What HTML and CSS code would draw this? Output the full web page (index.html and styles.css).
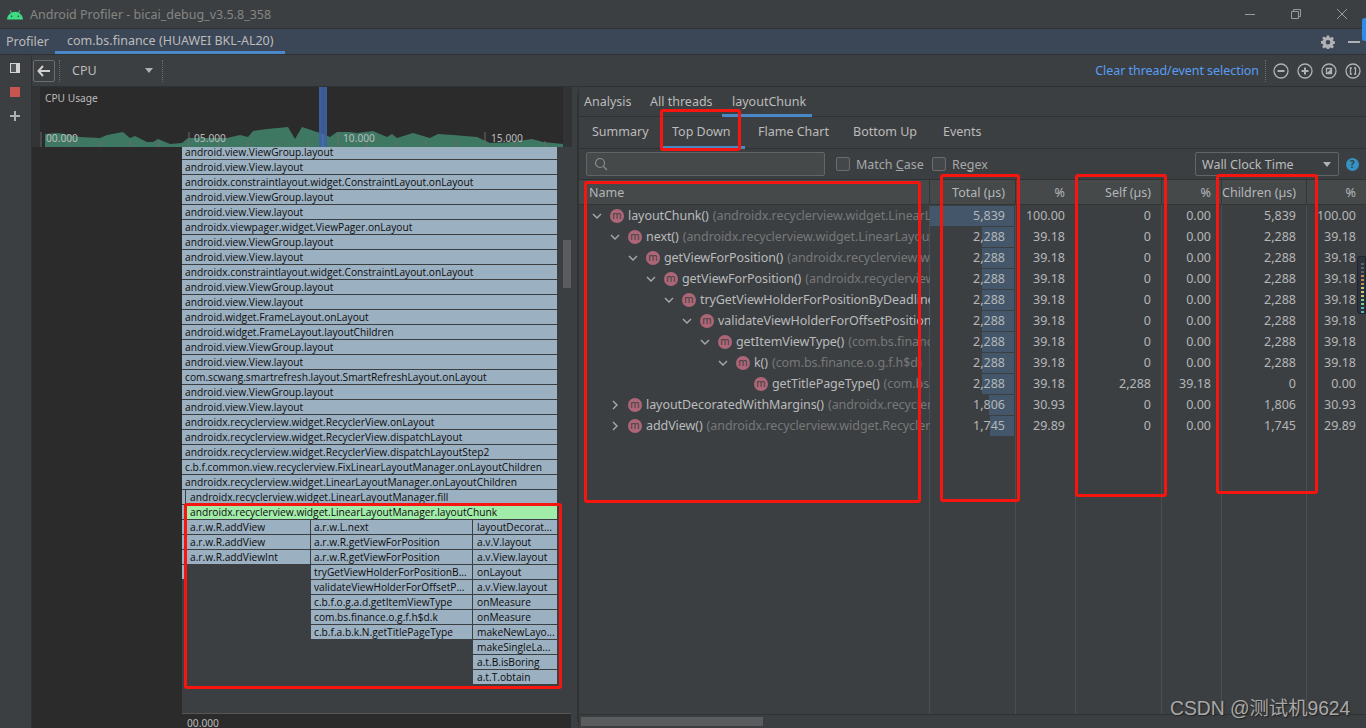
FILE: index.html
```html
<!DOCTYPE html>
<html lang="en">
<head>
<meta charset="utf-8">
<title>Android Profiler</title>
<link rel="stylesheet" href="styles.css">
</head>
<body>
<div class="app">
  <header class="titlebar">
    <svg class="droid" viewBox="0 0 16 12" width="16" height="12"><path d="M0 11.500a8 8 0 0 1 4-6.600L2.700 2.600l.7-.4L4.800 4.500a8 8 0 0 1 6.400 0L12.600 2.200l.7.4L12 4.900a8 8 0 0 1 4 6.600z" fill="#3ddc84"/><circle cx="4.600" cy="8.300" r=".8" fill="#3c3f41"/><circle cx="11.400" cy="8.300" r=".8" fill="#3c3f41"/></svg>
    <span class="title-text">Android Profiler - bicai_debug_v3.5.8_358</span>
    <div class="winctl">
      <svg width="12" height="12" viewBox="0 0 12 12"><path d="M1 6.500h10" stroke="#9a9a9a" fill="none"/></svg>
      <svg width="12" height="12" viewBox="0 0 12 12"><path d="M1.500 3.500h7v7h-7zM3.500 3.500v-2h7v7h-2" stroke="#9a9a9a" fill="none"/></svg>
      <svg width="12" height="12" viewBox="0 0 12 12"><path d="M1 1l10 10M11 1L1 11" stroke="#9a9a9a" fill="none"/></svg>
    </div>
  </header>

  <nav class="toolwin">
    <span class="tw-label">Profiler</span>
    <span class="tw-tab">com.bs.finance (HUAWEI BKL-AL20)</span>
    <div class="tw-actions">
      <svg width="14" height="14" viewBox="0 0 14 14"><path d="M5.800.5h2.400l.3 1.800 1.200.5L11.200 1.700l1.700 1.700-1.100 1.500.5 1.200 1.800.3v2.400l-1.800.3-.5 1.200 1.100 1.500-1.700 1.700-1.500-1.100-1.200.5-.3 1.800H5.800l-.3-1.800-1.200-.5-1.500 1.100-1.700-1.700 1.100-1.500-.5-1.200L0 8.500V6.100l1.800-.3.5-1.200-1.100-1.500 1.700-1.700 1.500 1.100 1.200-.5zM7 5a2.300 2.300 0 1 0 0 4.600A2.300 2.300 0 0 0 7 5z" fill="#afb1b3" fill-rule="evenodd"/></svg>
      <svg width="12" height="4" viewBox="0 0 12 4"><rect y="1" width="12" height="2" fill="#afb1b3"/></svg>
    </div>
  </nav>

  <div class="body">
    <aside class="strip">
      <svg width="10" height="10" viewBox="0 0 10 10"><rect x=".5" y=".5" width="9" height="9" fill="#54575a" stroke="#d4d4d4"/><rect x="6" y="1" width="3" height="8" fill="#d4d4d4"/></svg>
      <span class="stop"></span>
      <svg width="10" height="10" viewBox="0 0 10 10"><path d="M4 0h2v4h4v2H6v4H4V6H0V4h4z" fill="#afb1b3"/></svg>
    </aside>

    <div class="content">
      <div class="toolbar">
        <button class="back"><svg width="14" height="12" viewBox="0 0 14 12"><path d="M6 1L1.500 6 6 11M2 6h11" stroke="#cfcfcf" stroke-width="2" fill="none"/></svg></button>
        <span class="dots"></span>
        <div class="picker"><span>CPU</span><i class="caret"></i></div>
        <span class="dots"></span>
        <a class="clear">Clear thread/event selection</a>
        <span class="dots dots-r"></span>
        <div class="zoomers">
          <svg width="16" height="16" viewBox="0 0 16 16"><circle cx="8" cy="8" r="7" class="ic"/><path d="M4.500 8h7" class="ib"/></svg>
          <svg width="16" height="16" viewBox="0 0 16 16"><circle cx="8" cy="8" r="7" class="ic"/><path d="M4.500 8h7M8 4.500v7" class="ib"/></svg>
          <svg width="16" height="16" viewBox="0 0 16 16"><circle cx="8" cy="8" r="7" class="ic"/><path d="M5.500 5.500h5v5h-5z" class="ib2"/><path d="M6 10l4-4v4z" fill="#afb1b3"/></svg>
          <svg width="16" height="16" viewBox="0 0 16 16"><circle cx="8" cy="8" r="7" class="ic"/><path d="M7 5H5.500v6H7M9 5h1.500v6H9" class="ib2"/></svg>
        </div>
      </div>

      <div class="split">
        <section class="left">
          <div class="chart-row">
            <span class="chart-gutter"></span>
            <div class="chart">
              <span class="chart-title">CPU Usage</span>
              <svg class="chart-svg" width="523" height="60" viewBox="40 87 523 60">
                <path fill="#3e7863" d="M45 147V134L58 133 70 135 80 137 100 138 107 135 123 132 130 138 135 136 147 142 153 142 158 139 170 144 182 143 188 138 227 138 240 135 248 137 253 131 267 129 288 127 295 139 302 127 320 133 330 137 337 132 350 132 357 133 373 131 387 137 392 134 397 138 413 133 430 138 438 134 453 135 477 137 490 143 513 142 532 139 543 142 563 144V147z"/>
                <g class="ticks">
                  <path d="M41 132V147M189 132V147M338 132V147M485 132V147"/>
                  <path d="M70 141V147M100 141V147M130 141V147M159 141V147M219 141V147M248 141V147M278 141V147M308 141V147M367 141V147M397 141V147M426 141V147M456 141V147M515 141V147M545 141V147"/>
                </g>
                <rect x="319" y="87" width="3.500" height="60" fill="#3d62a6" opacity=".92"/>
                <rect x="322.500" y="87" width="1" height="60" fill="#5482c4" opacity=".8"/>
                <rect x="323.500" y="87" width="3.500" height="60" fill="#3d62a6" opacity=".92"/>
                <text x="46" y="142" class="tl">00.000</text>
                <text x="194" y="142" class="tl">05.000</text>
                <text x="343" y="142" class="tl">10.000</text>
                <text x="491" y="142" class="tl">15.000</text>
              </svg>
            </div>
            <span class="chart-side"></span>
          </div>
          <div class="flame-row">
            <span class="flame-blank"></span>
            <div class="flame-col">
              <div class="flame">
                <div class="stack">
                  <div class="fr first">android.view.ViewGroup.layout</div>
                  <div class="fr">android.view.View.layout</div>
                  <div class="fr">androidx.constraintlayout.widget.ConstraintLayout.onLayout</div>
                  <div class="fr">android.view.ViewGroup.layout</div>
                  <div class="fr">android.view.View.layout</div>
                  <div class="fr">androidx.viewpager.widget.ViewPager.onLayout</div>
                  <div class="fr">android.view.ViewGroup.layout</div>
                  <div class="fr">android.view.View.layout</div>
                  <div class="fr">androidx.constraintlayout.widget.ConstraintLayout.onLayout</div>
                  <div class="fr">android.view.ViewGroup.layout</div>
                  <div class="fr">android.view.View.layout</div>
                  <div class="fr">android.widget.FrameLayout.onLayout</div>
                  <div class="fr">android.widget.FrameLayout.layoutChildren</div>
                  <div class="fr">android.view.ViewGroup.layout</div>
                  <div class="fr">android.view.View.layout</div>
                  <div class="fr">com.scwang.smartrefresh.layout.SmartRefreshLayout.onLayout</div>
                  <div class="fr">android.view.ViewGroup.layout</div>
                  <div class="fr">android.view.View.layout</div>
                  <div class="fr">androidx.recyclerview.widget.RecyclerView.onLayout</div>
                  <div class="fr">androidx.recyclerview.widget.RecyclerView.dispatchLayout</div>
                  <div class="fr">androidx.recyclerview.widget.RecyclerView.dispatchLayoutStep2</div>
                  <div class="fr">c.b.f.common.view.recyclerview.FixLinearLayoutManager.onLayoutChildren</div>
                  <div class="fr">androidx.recyclerview.widget.LinearLayoutManager.onLayoutChildren</div>
                  <div class="lower">
                    <div class="sliver">
                      <div class="fr"></div><div class="fr"></div><div class="fr"></div><div class="fr"></div><div class="fr"></div><div class="fr"></div>
                    </div>
                    <div class="lower-main">
                      <div class="fr pad4">androidx.recyclerview.widget.LinearLayoutManager.fill</div>
                      <div class="fr chunk">androidx.recyclerview.widget.LinearLayoutManager.layoutChunk</div>
                      <div class="subcols">
                        <div class="sc sc1">
                          <div class="fr">a.r.w.R.addView</div>
                          <div class="fr">a.r.w.R.addView</div>
                          <div class="fr">a.r.w.R.addViewInt</div>
                        </div>
                        <div class="sc sc2">
                          <div class="fr">a.r.w.L.next</div>
                          <div class="fr">a.r.w.R.getViewForPosition</div>
                          <div class="fr">a.r.w.R.getViewForPosition</div>
                          <div class="fr">tryGetViewHolderForPositionB...</div>
                          <div class="fr">validateViewHolderForOffsetP...</div>
                          <div class="fr">c.b.f.o.g.a.d.getItemViewType</div>
                          <div class="fr">com.bs.finance.o.g.f.h$d.k</div>
                          <div class="fr">c.b.f.a.b.k.N.getTitlePageType</div>
                        </div>
                        <div class="sc sc3">
                          <div class="fr">layoutDecorat...</div>
                          <div class="fr">a.v.V.layout</div>
                          <div class="fr">a.v.View.layout</div>
                          <div class="fr">onLayout</div>
                          <div class="fr">a.v.View.layout</div>
                          <div class="fr">onMeasure</div>
                          <div class="fr">onMeasure</div>
                          <div class="fr">makeNewLayo...</div>
                          <div class="fr">makeSingleLa...</div>
                          <div class="fr">a.t.B.isBoring</div>
                          <div class="fr">a.t.T.obtain</div>
                        </div>
                      </div>
                    </div>
                  </div>
                </div>
                <div class="vscroll"><span class="thumb"></span></div>
              </div>
              <div class="axis">00.000</div>
            </div>
          </div>
        </section>

        <section class="right">
          <div class="tabs tabs1">
            <span class="t1">Analysis</span>
            <span class="t2">All threads</span>
            <span class="t3 on">layoutChunk</span>
          </div>
          <div class="tabs tabs2">
            <span class="s1">Summary</span>
            <span class="s2 on">Top Down</span>
            <span class="s3">Flame Chart</span>
            <span class="s4">Bottom Up</span>
            <span class="s5">Events</span>
          </div>
          <div class="filter">
            <div class="search"><svg width="14" height="14" viewBox="0 0 14 14"><circle cx="6" cy="6" r="4.500" fill="none" stroke="#8a8d8f" stroke-width="1.200"/><path d="M9.500 9.500L13 13" stroke="#8a8d8f" stroke-width="1.200"/></svg></div>
            <label class="chk chk1"><i></i><span>Match <u>C</u>ase</span></label>
            <label class="chk chk2"><i></i><span>Re<u>g</u>ex</span></label>
            <div class="combo"><span>Wall Clock Time</span><i class="caret"></i></div>
            <span class="help">?</span>
          </div>
          <div class="table">
            <div class="col-lines"><i></i><i></i><i></i><i></i><i></i><i></i><i></i></div>
            <div class="row head">
              <div class="name">Name</div><div class="n">Total (µs)</div><div class="n">%</div><div class="n">Self (µs)</div><div class="n">%</div><div class="n">Children (µs)</div><div class="n lastc">%</div>
            </div>
            <div class="row">
              <div class="name d0"><svg class="chev" viewBox="0 0 10 10"><path d="M1 3l4 4 4-4"/></svg><b>m</b><span>layoutChunk()</span><em>(androidx.recyclerview.widget.LinearLayoutManager)</em></div>
              <div class="n tot"><i style="width:84px"></i><span>5,839</span></div><div class="n">100.00</div><div class="n">0</div><div class="n">0.00</div><div class="n">5,839</div><div class="n lastc">100.00</div>
            </div>
            <div class="row">
              <div class="name d1"><svg class="chev" viewBox="0 0 10 10"><path d="M1 3l4 4 4-4"/></svg><b>m</b><span>next()</span><em>(androidx.recyclerview.widget.LinearLayoutManager$LayoutState)</em></div>
              <div class="n tot"><i style="width:32px"></i><span>2,288</span></div><div class="n">39.18</div><div class="n">0</div><div class="n">0.00</div><div class="n">2,288</div><div class="n lastc">39.18</div>
            </div>
            <div class="row">
              <div class="name d2"><svg class="chev" viewBox="0 0 10 10"><path d="M1 3l4 4 4-4"/></svg><b>m</b><span>getViewForPosition()</span><em>(androidx.recyclerview.widget.RecyclerView)</em></div>
              <div class="n tot"><i style="width:32px"></i><span>2,288</span></div><div class="n">39.18</div><div class="n">0</div><div class="n">0.00</div><div class="n">2,288</div><div class="n lastc">39.18</div>
            </div>
            <div class="row">
              <div class="name d3"><svg class="chev" viewBox="0 0 10 10"><path d="M1 3l4 4 4-4"/></svg><b>m</b><span>getViewForPosition()</span><em>(androidx.recyclerview.widget.RecyclerView)</em></div>
              <div class="n tot"><i style="width:32px"></i><span>2,288</span></div><div class="n">39.18</div><div class="n">0</div><div class="n">0.00</div><div class="n">2,288</div><div class="n lastc">39.18</div>
            </div>
            <div class="row">
              <div class="name d4"><svg class="chev" viewBox="0 0 10 10"><path d="M1 3l4 4 4-4"/></svg><b>m</b><span>tryGetViewHolderForPositionByDeadline()</span><em>(androidx)</em></div>
              <div class="n tot"><i style="width:32px"></i><span>2,288</span></div><div class="n">39.18</div><div class="n">0</div><div class="n">0.00</div><div class="n">2,288</div><div class="n lastc">39.18</div>
            </div>
            <div class="row">
              <div class="name d5"><svg class="chev" viewBox="0 0 10 10"><path d="M1 3l4 4 4-4"/></svg><b>m</b><span>validateViewHolderForOffsetPosition()</span><em>(androidx)</em></div>
              <div class="n tot"><i style="width:32px"></i><span>2,288</span></div><div class="n">39.18</div><div class="n">0</div><div class="n">0.00</div><div class="n">2,288</div><div class="n lastc">39.18</div>
            </div>
            <div class="row">
              <div class="name d6"><svg class="chev" viewBox="0 0 10 10"><path d="M1 3l4 4 4-4"/></svg><b>m</b><span>getItemViewType()</span><em>(com.bs.finance.o.g.a.d)</em></div>
              <div class="n tot"><i style="width:32px"></i><span>2,288</span></div><div class="n">39.18</div><div class="n">0</div><div class="n">0.00</div><div class="n">2,288</div><div class="n lastc">39.18</div>
            </div>
            <div class="row">
              <div class="name d7"><svg class="chev" viewBox="0 0 10 10"><path d="M1 3l4 4 4-4"/></svg><b>m</b><span>k()</span><em>(com.bs.finance.o.g.f.h$d)</em></div>
              <div class="n tot"><i style="width:32px"></i><span>2,288</span></div><div class="n">39.18</div><div class="n">0</div><div class="n">0.00</div><div class="n">2,288</div><div class="n lastc">39.18</div>
            </div>
            <div class="row">
              <div class="name d8"><span class="nochev"></span><b>m</b><span>getTitlePageType()</span><em>(com.bs.finance.a.b.k.N)</em></div>
              <div class="n tot"><i style="width:32px"></i><span>2,288</span></div><div class="n">39.18</div><div class="n">2,288</div><div class="n">39.18</div><div class="n">0</div><div class="n lastc">0.00</div>
            </div>
            <div class="row">
              <div class="name d1"><svg class="chev" viewBox="0 0 10 10"><path d="M3 1l4 4-4 4"/></svg><b>m</b><span>layoutDecoratedWithMargins()</span><em>(androidx.recyclerview.widget)</em></div>
              <div class="n tot"><i style="width:25px"></i><span>1,806</span></div><div class="n">30.93</div><div class="n">0</div><div class="n">0.00</div><div class="n">1,806</div><div class="n lastc">30.93</div>
            </div>
            <div class="row">
              <div class="name d1"><svg class="chev" viewBox="0 0 10 10"><path d="M3 1l4 4-4 4"/></svg><b>m</b><span>addView()</span><em>(androidx.recyclerview.widget.RecyclerView$LayoutManager)</em></div>
              <div class="n tot"><i style="width:24px"></i><span>1,745</span></div><div class="n">29.89</div><div class="n">0</div><div class="n">0.00</div><div class="n">1,745</div><div class="n lastc">29.89</div>
            </div>
          </div>
          <div class="hscroll"><span></span></div>
        </section>
      </div>
    </div>
  </div>

  <span class="red r-topdown"></span>
  <span class="red r-name"></span>
  <span class="red r-total"></span>
  <span class="red r-self"></span>
  <span class="red r-children"></span>
  <span class="red r-flame"></span>
  <span class="float-tab"></span>
  <div class="float-meter"><i class="g"></i><i class="g"></i><i class="g"></i><i class="o"></i><i class="o"></i><i class="o"></i><i class="y"></i><i class="y"></i><i class="y"></i><i class="l"></i><i class="l"></i><i class="t"></i><i class="t"></i></div>
  <span class="watermark">CSDN @测试机9624</span>
</div>
</body>
</html>
```

FILE: styles.css
```css
* { box-sizing: border-box; }
html, body { margin: 0; height: 100%; overflow: hidden; background: #3c3f41; }
body { font: 12.500px "Noto Sans", "Noto Sans CJK SC", sans-serif; color: #bbbbbb; }
.app { position: relative; width: 1366px; height: 728px; display: flex; flex-direction: column; }

.titlebar { height: 29px; flex: none; display: flex; align-items: center; padding-left: 7px; background: #3c3f41; border-bottom: 1px solid #2f3133; }
.droid { margin-right: 7px; }
.title-text { color: #858585; }
.winctl { margin-left: auto; display: flex; gap: 34px; padding-right: 18px; }

.toolwin { height: 26px; flex: none; display: flex; align-items: center; background: #3b4757; border-bottom: 1px solid #2f3133; position: relative; }
.tw-label { margin-left: 6px; width: 49px; }
.tw-tab { width: 230px; height: 25px; padding: 3px 0 0 12px; border-bottom: 3px solid #4a88c7; white-space: nowrap; }
.tw-actions { margin-left: auto; display: flex; align-items: center; gap: 13px; padding-right: 6px; }

.body { flex: 1; min-height: 0; display: flex; }
.strip { width: 32px; flex: none; display: flex; flex-direction: column; align-items: center; gap: 14px; padding: 8px 2px 0 0; border-right: 1px solid #303234; }
.stop { width: 10px; height: 10px; background: #c75450; }

.content { flex: 1; min-width: 0; display: flex; flex-direction: column; }
.toolbar { height: 32px; flex: none; display: flex; align-items: center; border-bottom: 1px solid #2f3133; position: relative; }
.back { width: 22px; height: 22px; margin: 0 4px 0 1px; padding: 0; background: none; border: 1px solid #6b6e70; border-radius: 2px; display: flex; align-items: center; justify-content: center; }
.dots { width: 1px; height: 22px; border-left: 1px dotted #6b6e70; flex: none; }
.picker { width: 102px; display: flex; align-items: center; padding: 0 9.500px 0 12px; justify-content: space-between; }
.caret { display: block; width: 0; height: 0; border-left: 4.500px solid transparent; border-right: 4.500px solid transparent; border-top: 5px solid #afb1b3; }
.clear { margin-left: auto; color: #589df6; margin-right: 6px; letter-spacing: -.05px; }
.zoomers { display: flex; gap: 8px; margin: 0 5px 0 7px; }
.ic { fill: none; stroke: #afb1b3; stroke-width: 1.300; }
.ib { fill: none; stroke: #afb1b3; stroke-width: 2; }
.ib2 { fill: none; stroke: #afb1b3; stroke-width: 1.300; }

.split { flex: 1; min-height: 0; display: flex; }
.left { width: 540px; flex: none; display: flex; flex-direction: column; }
.chart-row { height: 60px; flex: none; display: flex; }
.chart-gutter { width: 8px; background: #323436; }
.chart { width: 523px; background: #2b2b2b; position: relative; }
.chart-side { flex: 1; background: #313335; }
.chart-title { position: absolute; left: 5px; top: 4px; font-size: 10.200px; }
.chart-svg { display: block; }
.ticks path { stroke: #6b6b6b; fill: none; }
.tl { font: 10.200px "Noto Sans", sans-serif; fill: #bbbbbb; }

.flame-row { flex: 1; min-height: 0; display: flex; }
.flame-blank { width: 150px; background: #2b2b2b; }
.flame-col { flex: 1; min-width: 0; display: flex; flex-direction: column; }
.flame { flex: 1; min-height: 0; display: flex; }
.stack { width: 376px; }
.fr { height: 14px; margin: 0 1px 1px 0; padding-left: 3px; background: #9bb0c1; color: #0c0c0c; font: 10.200px/15px "Open Sans", sans-serif; white-space: nowrap; overflow: hidden; }
.fr.first { height: 12px; line-height: 11px; }
.lower { display: flex; }
.sliver { width: 4px; flex: none; }
.sliver .fr { width: 3px; padding: 0; margin-right: 1px; }
.lower-main { flex: 1; min-width: 0; }
.pad4 { padding-left: 4px; }
.chunk { background: #a2eca9; margin-left: 1px; }
.subcols { display: flex; gap: 1px; margin: 0 1px 0 1px; }
.sc .fr { margin-right: 0; }
.sc1 { width: 123px; }
.sc2 { width: 161px; }
.sc3 { width: 84px; }
.sc3 .fr { padding-left: 4px; }
.vscroll { flex: 1; padding: 93px 1px 0 5px; }
.thumb { display: block; height: 48px; background: #5a5c5e; }
.axis { height: 15px; flex: none; background: #2b2b2b; border-top: 1px solid #555; padding-left: 5px; font-size: 10.200px; line-height: 19px; overflow: hidden; margin-right: 1px; }

.right { flex: 1; min-width: 0; margin-left: 6px; border-left: 1px solid #303234; display: flex; flex-direction: column; box-shadow: -7px 0 0 -6px #303234; }
.tabs { flex: none; display: flex; border-bottom: 1px solid #2f3133; }
.tabs span { display: block; position: relative; white-space: nowrap; }
.tabs .on::after { content: ""; position: absolute; left: 0; right: 0; bottom: -1px; height: 3px; background: #4a88c7; }
.tabs1 { height: 30px; }
.tabs1 span { height: 29px; padding-top: 6px; }
.t1 { width: 71px; padding-left: 5px; }
.t2 { width: 72px; }
.t3 { width: 90px; padding-left: 10px; }
.tabs2 { height: 32px; }
.tabs2 span { height: 31px; padding-top: 6px; }
.s1 { width: 82px; padding-left: 13px; }
.s2 { width: 84px; padding-left: 11px; }
.s3 { width: 100px; padding-left: 13px; }
.s4 { width: 90px; padding-left: 8px; }
.s5 { width: 80px; padding-left: 8px; }

.filter { height: 31px; flex: none; display: flex; align-items: center; border-bottom: 1px solid #2f3133; }
.search { width: 239px; height: 24px; margin-left: 7px; padding: 4px 0 0 7px; background: #45494a; border: 1px solid #646464; border-radius: 2px; }
.chk { display: flex; align-items: center; white-space: nowrap; color: #a5a7a9; }
.chk i { width: 14px; height: 14px; margin-right: 6px; background: #43474a; border: 1px solid #6b6b6b; border-radius: 2px; }
.chk1 { margin-left: 11px; width: 96px; }
.chk2 { width: 60px; }
.combo { width: 144px; height: 24px; margin-left: auto; display: flex; align-items: center; justify-content: space-between; padding: 0 7px 0 6px; border: 1px solid #646464; border-radius: 2px; }
.help { width: 13px; height: 13px; margin: 0 7px; border-radius: 50%; background: #3592c4; color: #3c3f41; font-size: 10px; font-weight: 700; line-height: 13px; text-align: center; }

.table { flex: 1; min-height: 0; position: relative; overflow: hidden; }
.col-lines { position: absolute; inset: 0; display: grid; grid-template-columns: 351px 86px 60px 86px 60px 85px 59px; }
.col-lines i { border-right: 1px solid #4b4e50; }
.col-lines i:last-child { border: 0; }
.row { position: relative; display: grid; grid-template-columns: 351px 86px 60px 86px 60px 85px 59px; height: 21px; line-height: 21px; color: #b4b6b8; white-space: nowrap; }
.row.head { height: 25px; line-height: 25px; background: #45494a; border-bottom: 1px solid #333536; }
.row.head > div { border-right: 1px solid #333536; }
.row.head > div:last-child { border: 0; }
.row.head .n { padding-right: 10px; }
.name { position: relative; display: flex; align-items: center; white-space: nowrap; overflow: hidden; letter-spacing: -.07px; }
.head .name { padding-left: 10px; display: block; letter-spacing: 0; }
.n { text-align: right; padding-right: 11px; position: relative; }
.n.lastc { padding-right: 10px; }
.tot i { position: absolute; right: 2px; top: 1px; height: 20px; background: #43566a; }
.tot span { position: relative; }
.chev { width: 10px; height: 10px; flex: none; margin-right: 8px; }
.chev path { fill: none; stroke: #a8aaac; stroke-width: 1.400; }
.nochev { width: 10px; flex: none; margin-right: 8px; }
.name b { width: 14px; height: 14px; flex: none; margin-right: 4px; border-radius: 50%; background: #ad6678; color: #3c3f41; font: 400 10px/13px "Noto Sans", sans-serif; letter-spacing: 0; text-align: center; }
.name span { color: #b9bbbd; }
.name em { font-style: normal; color: #767879; margin-left: 4px; }
.d0 { padding-left: 13px; }
.d1 { padding-left: 31px; }
.d2 { padding-left: 49px; }
.d3 { padding-left: 67px; }
.d4 { padding-left: 85px; }
.d5 { padding-left: 103px; }
.d6 { padding-left: 121px; }
.d7 { padding-left: 139px; }
.d8 { padding-left: 157px; }

.hscroll { height: 14px; flex: none; border-top: 1px solid #2f3133; padding: 2px 0 0 2px; }
.hscroll span { display: block; width: 182px; height: 9px; background: #5a5c5e; }

.red { position: absolute; border: 3px solid #f7150f; border-radius: 3px; pointer-events: none; }
.r-topdown { left: 660px; top: 109px; width: 81px; height: 42px; }
.r-name { left: 584px; top: 181px; width: 337px; height: 322px; }
.r-total { left: 940px; top: 174px; width: 80px; height: 328px; }
.r-self { left: 1075px; top: 174px; width: 92px; height: 323px; }
.r-children { left: 1216px; top: 174px; width: 102px; height: 320px; }
.r-flame { left: 184px; top: 503px; width: 378px; height: 186px; }
.float-tab { position: absolute; right: 0; top: 18px; width: 4px; height: 23px; background: #2d8ceb; border-radius: 3px 0 0 3px; }
.float-meter { position: absolute; right: 0; top: 256px; width: 9px; height: 58px; padding: 6px 1px 0 3px; background: #2c3240; border: 1px solid #20242c; border-radius: 3px 0 0 3px; display: flex; flex-direction: column; gap: 2px; }
.float-meter i { height: 2px; background: #5a5f68; flex: none; }
.float-meter .o { background: #c08a4a; }
.float-meter .y { background: #c9c46a; }
.float-meter .l { background: #7fc98a; }
.float-meter .t { background: #58b4a8; }
.watermark { position: absolute; left: 1170px; top: 693px; font: 19.300px "Liberation Sans", "Noto Sans CJK SC", sans-serif; color: #a8a8a8; text-shadow: 1px 1px 1px #222; white-space: nowrap; }
```
